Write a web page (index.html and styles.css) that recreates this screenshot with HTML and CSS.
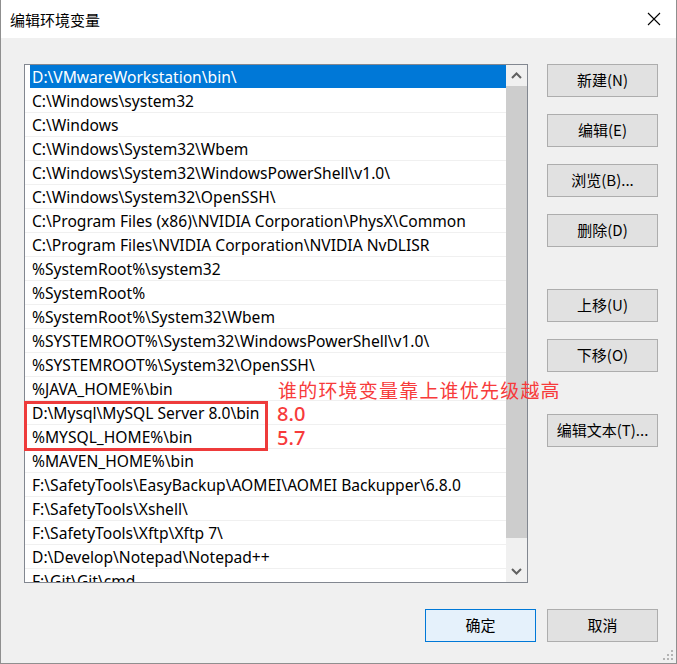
FILE: index.html
```html
<!DOCTYPE html>
<html lang="zh-CN">
<head>
<meta charset="utf-8">
<title>编辑环境变量</title>
<link rel="stylesheet" href="styles.css">
</head>
<body>
<div class="window">
  <div class="titlebar">
    <span class="title">编辑环境变量</span>
    <span class="close">
      <svg width="14" height="14" viewBox="0 0 14 14"><path d="M1 1 L13 13 M13 1 L1 13" stroke="#000" stroke-width="1.1" fill="none"/></svg>
    </span>
  </div>
  <div class="content">
    <div class="main">
      <div class="listbox">
        <div class="rows">
          <div class="row selected"><span class="cell">D:\VMwareWorkstation\bin\</span></div>
          <div class="row"><span class="cell">C:\Windows\system32</span></div>
          <div class="row"><span class="cell">C:\Windows</span></div>
          <div class="row"><span class="cell">C:\Windows\System32\Wbem</span></div>
          <div class="row"><span class="cell">C:\Windows\System32\WindowsPowerShell\v1.0\</span></div>
          <div class="row"><span class="cell">C:\Windows\System32\OpenSSH\</span></div>
          <div class="row"><span class="cell">C:\Program Files (x86)\NVIDIA Corporation\PhysX\Common</span></div>
          <div class="row"><span class="cell">C:\Program Files\NVIDIA Corporation\NVIDIA NvDLISR</span></div>
          <div class="row"><span class="cell">%SystemRoot%\system32</span></div>
          <div class="row"><span class="cell">%SystemRoot%</span></div>
          <div class="row"><span class="cell">%SystemRoot%\System32\Wbem</span></div>
          <div class="row"><span class="cell">%SYSTEMROOT%\System32\WindowsPowerShell\v1.0\</span></div>
          <div class="row"><span class="cell">%SYSTEMROOT%\System32\OpenSSH\</span></div>
          <div class="row"><span class="cell">%JAVA_HOME%\bin</span></div>
          <div class="row"><span class="cell">D:\Mysql\MySQL Server 8.0\bin</span></div>
          <div class="row"><span class="cell">%MYSQL_HOME%\bin</span></div>
          <div class="row"><span class="cell">%MAVEN_HOME%\bin</span></div>
          <div class="row"><span class="cell">F:\SafetyTools\EasyBackup\AOMEI\AOMEI Backupper\6.8.0</span></div>
          <div class="row"><span class="cell">F:\SafetyTools\Xshell\</span></div>
          <div class="row"><span class="cell">F:\SafetyTools\Xftp\Xftp 7\</span></div>
          <div class="row"><span class="cell">D:\Develop\Notepad\Notepad++</span></div>
          <div class="row"><span class="cell">F:\Git\Git\cmd</span></div>
        </div>
        <div class="scrollbar">
          <div class="arrow">
            <svg width="11" height="7" viewBox="0 0 11 7"><path d="M1 6 L5.5 1.5 L10 6" stroke="#606060" stroke-width="2" fill="none"/></svg>
          </div>
          <div class="thumb"></div>
          <div class="track"></div>
          <div class="arrow">
            <svg width="11" height="7" viewBox="0 0 11 7"><path d="M1 1 L5.5 5.5 L10 1" stroke="#606060" stroke-width="2" fill="none"/></svg>
          </div>
        </div>
      </div>
      <div class="side">
        <div class="group">
          <button class="btn">新建(N)</button>
          <button class="btn">编辑(E)</button>
          <button class="btn">浏览(B)...</button>
          <button class="btn">删除(D)</button>
        </div>
        <div class="group">
          <button class="btn">上移(U)</button>
          <button class="btn">下移(O)</button>
        </div>
        <div class="group">
          <button class="btn">编辑文本(T)...</button>
        </div>
      </div>
    </div>
    <div class="footer">
      <button class="btn default">确定</button>
      <button class="btn">取消</button>
    </div>
  </div>
  <div class="mark-box"></div>
  <div class="note">谁的环境变量靠上谁优先级越高</div>
  <div class="ver v80">8.0</div>
  <div class="ver v57">5.7</div>
  <svg class="grip" width="11" height="11" viewBox="0 0 11 11">
    <rect x="8" y="0" width="2" height="2" fill="#b4b4b4"/>
    <rect x="4" y="4" width="2" height="2" fill="#b4b4b4"/>
    <rect x="8" y="4" width="2" height="2" fill="#b4b4b4"/>
    <rect x="0" y="8" width="2" height="2" fill="#b4b4b4"/>
    <rect x="4" y="8" width="2" height="2" fill="#b4b4b4"/>
    <rect x="8" y="8" width="2" height="2" fill="#b4b4b4"/>
  </svg>
</div>
</body>
</html>
```
FILE: styles.css
```css
* { box-sizing: border-box; }
html, body { margin: 0; padding: 0; background: #f0f0f0; }
body {
  font-family: "Noto Sans", "Noto Sans CJK SC", sans-serif;
  font-size: 14px;
  color: #000;
}
.window {
  position: relative;
  width: 677px;
  height: 664px;
  background: #f0f0f0;
  border: 1px solid #8f8f8f;
  border-top: none;
  overflow: hidden;
}
.titlebar {
  height: 38px;
  background: #fff;
  display: flex;
  align-items: center;
  justify-content: space-between;
  padding: 0 15px 0 9px;
}
.title {
  font-family: "Noto Sans CJK SC", sans-serif;
  font-size: 15px;
}
.close { display: flex; width: 14px; height: 14px; }
.content {
  padding: 26px 18px 0 23px;
  display: flex;
  flex-direction: column;
}
.main {
  display: flex;
  gap: 19px;
}
.listbox {
  width: 504px;
  height: 519px;
  background: #fff;
  border: 1px solid #828790;
  display: flex;
  overflow: hidden;
}
.rows {
  flex: 1;
  overflow: hidden;
}
.row {
  height: 24px;
  border-bottom: 1px solid #f0f0f0;
  padding-left: 5px;
}
.cell {
  display: block;
  height: 23px;
  line-height: 24px;
  padding-left: 2px;
  white-space: nowrap;
  font-family: "Noto Sans", sans-serif;
  font-size: 15.6px;
}
.row.selected { border-bottom-color: #fff; }
.row.selected .cell { background: #0078d7; color: #fff; }
.scrollbar {
  width: 21px;
  background: #f0f0f0;
  display: flex;
  flex-direction: column;
}
.arrow {
  height: 21px;
  display: flex;
  align-items: center;
  justify-content: center;
}
.thumb {
  height: 452px;
  background: #cdcdcd;
}
.track { flex: 1; }
.side {
  width: 111px;
  display: flex;
  flex-direction: column;
  gap: 42px;
}
.group {
  display: flex;
  flex-direction: column;
  gap: 17px;
}
.btn {
  width: 111px;
  height: 33px;
  background: #e1e1e1;
  border: 1px solid #adadad;
  font-family: "Noto Sans CJK SC", sans-serif;
  font-size: 15px;
  line-height: 20px;
  color: #000;
  padding: 0 0 2px;
  margin: 0;
}
.btn.default {
  background: #e5f1fb;
  border: 1px solid #0078d7;
}
.footer {
  display: flex;
  justify-content: flex-end;
  gap: 11px;
  margin-top: 26px;
}
.mark-box {
  position: absolute;
  left: 23px;
  top: 401px;
  width: 244px;
  height: 50px;
  border: 3px solid #ee3b3b;
}
.note {
  position: absolute;
  left: 277px;
  top: 377px;
  font-family: "Noto Sans CJK SC", sans-serif;
  font-size: 19px;
  line-height: 26px;
  letter-spacing: 1.2px;
  color: #f73b3b;
  white-space: nowrap;
}
.ver {
  position: absolute;
  left: 276px;
  font-family: "Noto Sans", sans-serif;
  font-size: 20px;
  font-weight: 500;
  line-height: 24px;
  color: #f73b3b;
}
.v80 { top: 402px; }
.v57 { top: 426px; }
.grip {
  position: absolute;
  right: 2px;
  bottom: 2px;
}
```
